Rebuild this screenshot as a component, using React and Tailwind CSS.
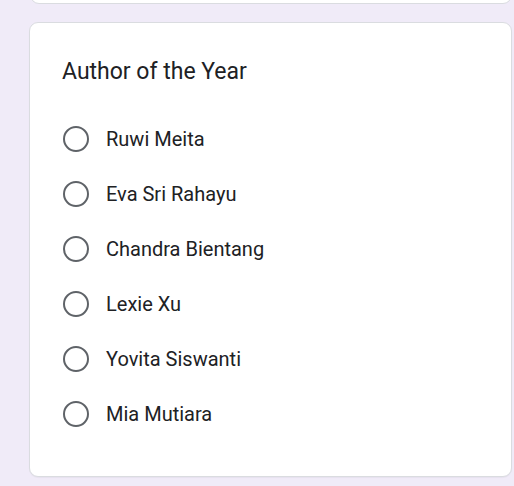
import React from "react";

const options = [
  "Ruwi Meita",
  "Eva Sri Rahayu",
  "Chandra Bientang",
  "Lexie Xu",
  "Yovita Siswanti",
  "Mia Mutiara",
];

export default function App() {
  return (
    <div
      className="h-[486px] w-[514px] overflow-hidden bg-[#f0ebf8] pl-[29px] pr-[2px] flex flex-col gap-[18px]"
      style={{ fontFamily: "Roboto, 'Noto Sans', sans-serif" }}
    >
      <div className="mt-[-20px] h-[24px] shrink-0 rounded-[9px] border border-[#dadce0] bg-white ml-[1px]" />
      <div className="shrink-0 rounded-[9px] border border-[#dadce0] bg-white pl-[32px] pt-[34px] pb-[34px] shadow-[0_1px_1px_rgba(0,0,0,0.04)]">
        <div className="text-[23px] leading-[30px] text-[#202124]">Author of the Year</div>
        <div className="mt-[24.5px] flex flex-col">
          {options.map((o) => (
            <div key={o} className="flex h-[55px] items-center">
              <div className="ml-[1px] h-[26px] w-[26px] shrink-0 rounded-full border-[2.5px] border-[#5f6368]" />
              <span className="ml-[17px] text-[20px] leading-[24px] text-[#202124]">{o}</span>
            </div>
          ))}
        </div>
      </div>
    </div>
  );
}
